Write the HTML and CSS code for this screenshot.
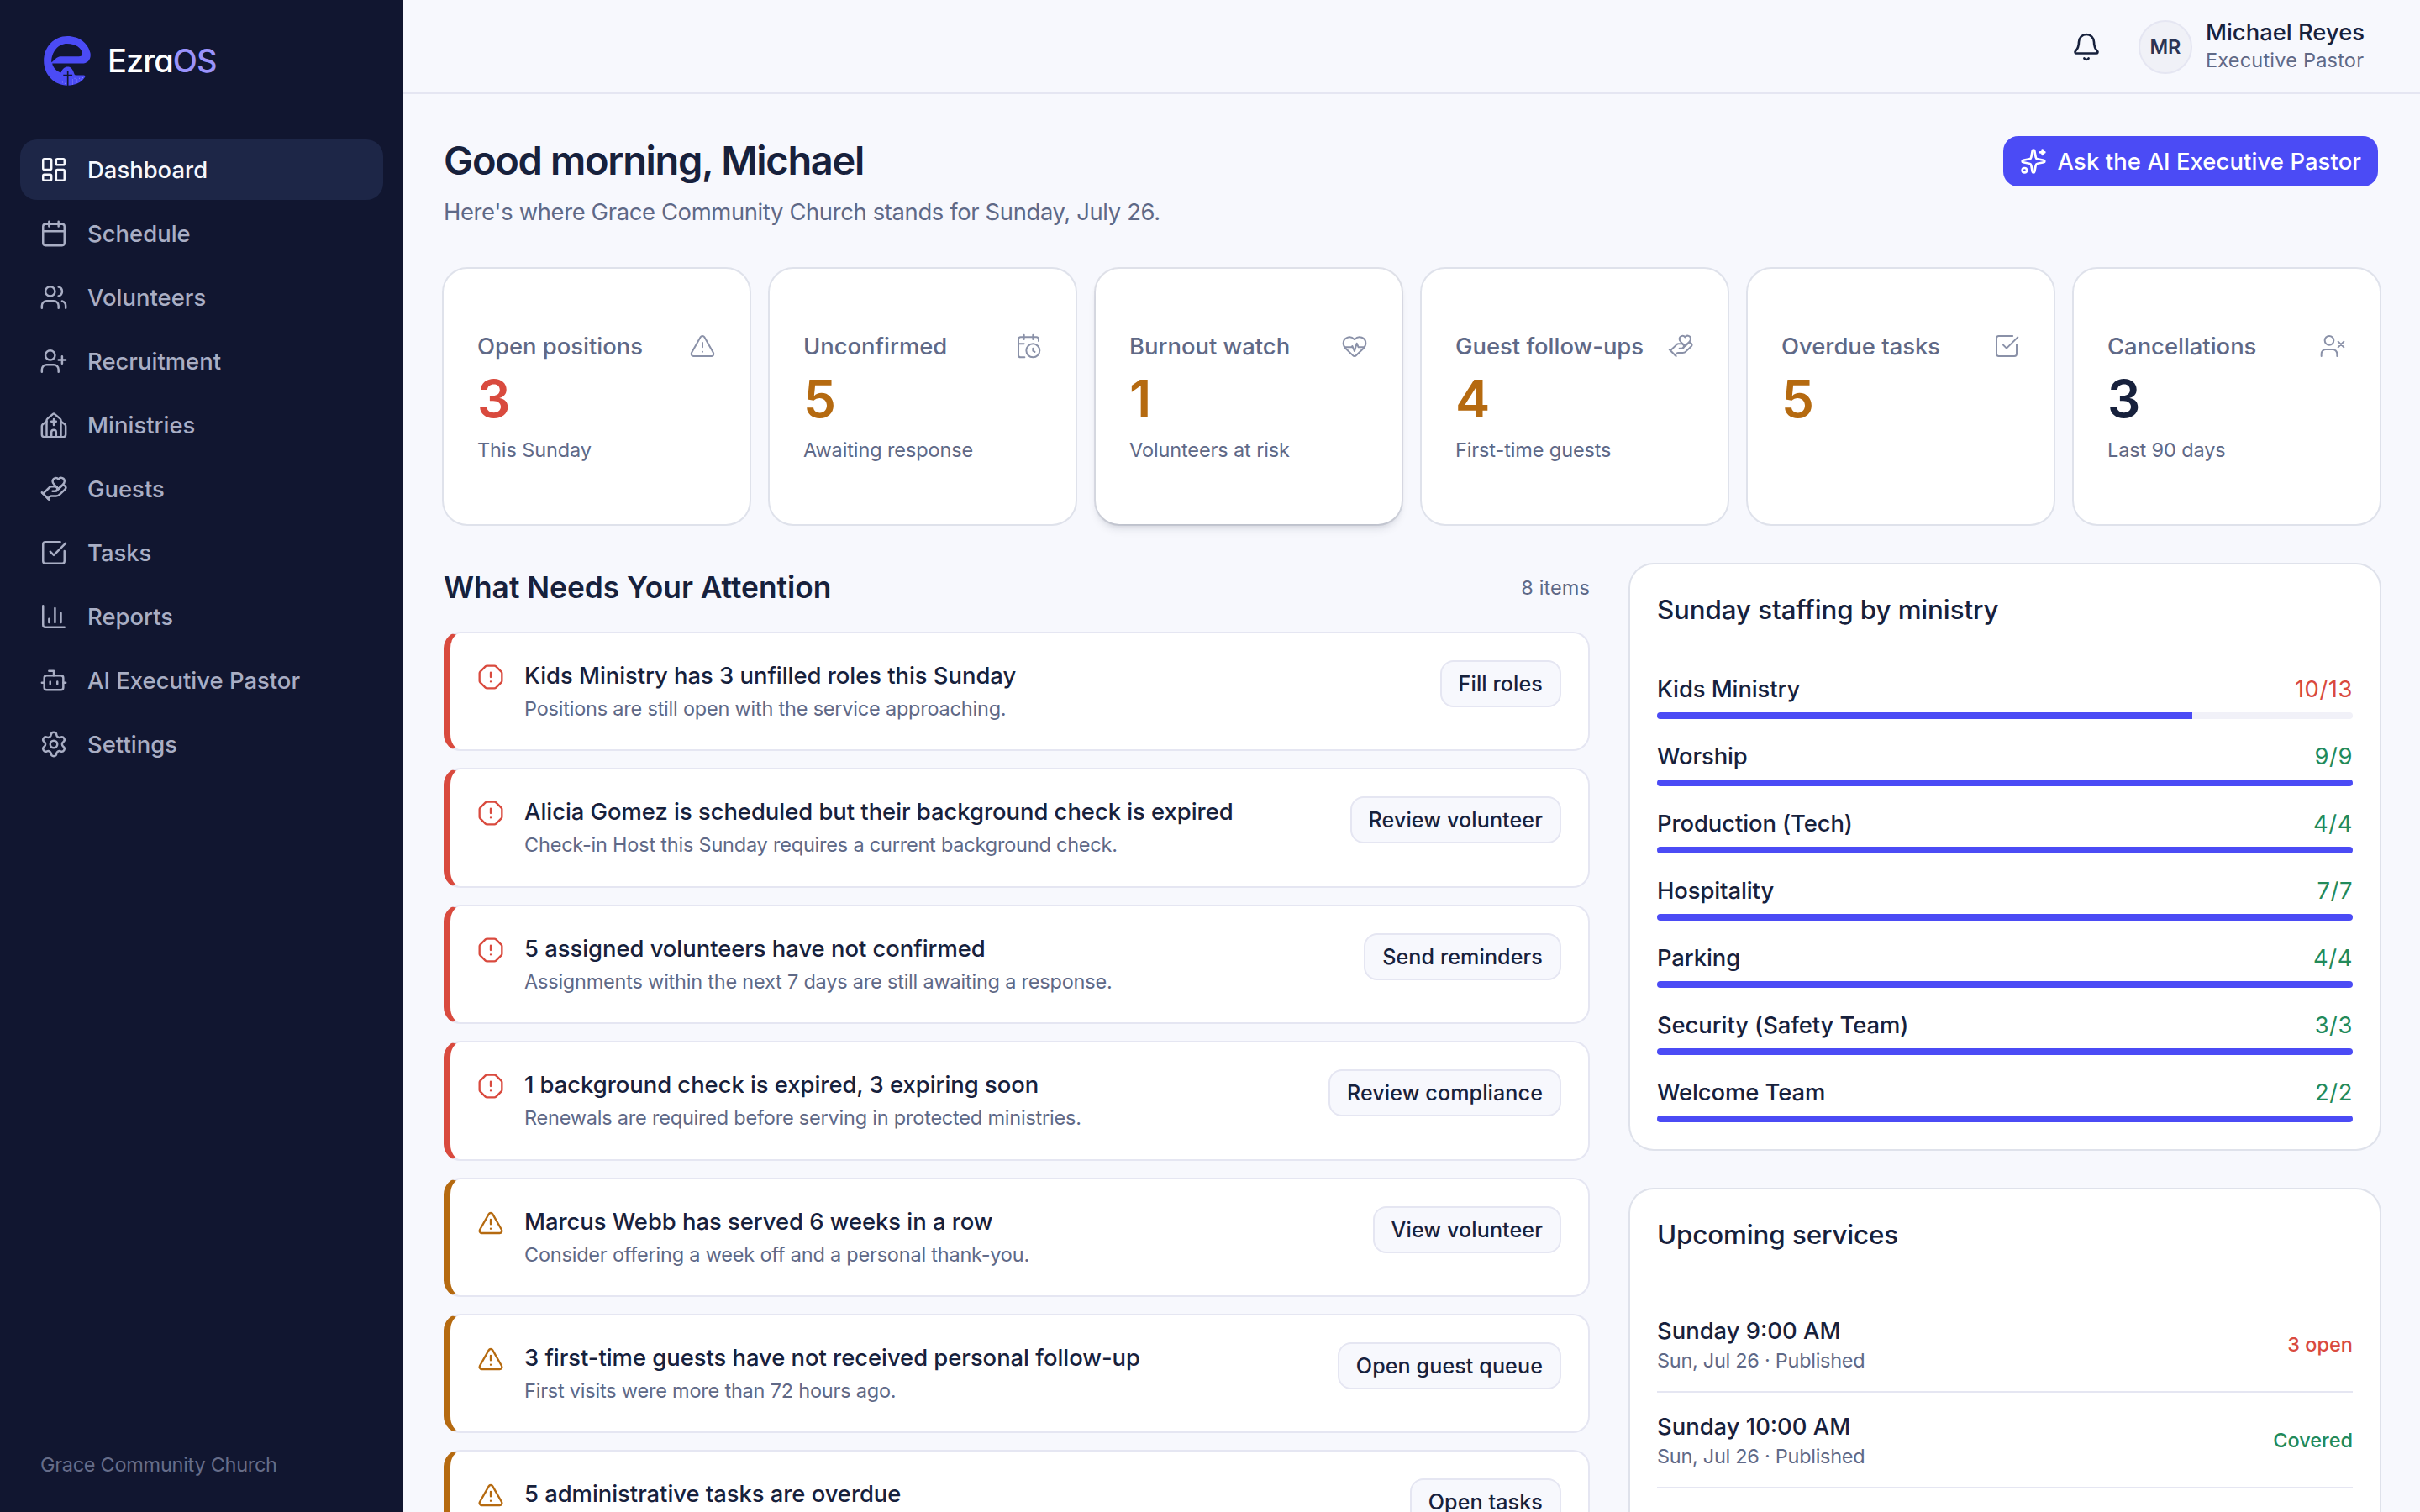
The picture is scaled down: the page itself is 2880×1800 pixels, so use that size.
FILE: index.html
```html
<!DOCTYPE html>
<html lang="en">
<head>
  <meta charset="UTF-8">
  <meta name="viewport" content="width=device-width, initial-scale=1.0">
  <title>EzraOS Dashboard</title>
  <link rel="stylesheet" href="styles.css">
</head>
<body>

  <!-- Icon sprite -->
  <svg class="sprite" aria-hidden="true">
    <symbol id="i-dashboard" viewBox="0 0 24 24"><rect x="3" y="3" width="7" height="9" rx="1"/><rect x="14" y="3" width="7" height="5" rx="1"/><rect x="14" y="12" width="7" height="9" rx="1"/><rect x="3" y="16" width="7" height="5" rx="1"/></symbol>
    <symbol id="i-calendar" viewBox="0 0 24 24"><path d="M8 2v4M16 2v4M3 10h18"/><rect x="3" y="4" width="18" height="18" rx="2"/></symbol>
    <symbol id="i-users" viewBox="0 0 24 24"><path d="M16 21v-2a4 4 0 0 0-4-4H6a4 4 0 0 0-4 4v2"/><circle cx="9" cy="7" r="4"/><path d="M22 21v-2a4 4 0 0 0-3-3.87M16 3.13a4 4 0 0 1 0 7.75"/></symbol>
    <symbol id="i-user-plus" viewBox="0 0 24 24"><path d="M16 21v-2a4 4 0 0 0-4-4H6a4 4 0 0 0-4 4v2"/><circle cx="9" cy="7" r="4"/><path d="M19 8v6M22 11h-6"/></symbol>
    <symbol id="i-user-x" viewBox="0 0 24 24"><path d="M16 21v-2a4 4 0 0 0-4-4H6a4 4 0 0 0-4 4v2"/><circle cx="9" cy="7" r="4"/><path d="m17 8 5 5M22 8l-5 5"/></symbol>
    <symbol id="i-church" viewBox="0 0 24 24"><path d="M10 9h4M12 7v5M14 22v-4a2 2 0 0 0-4 0v4"/><path d="M6 22V8.2a2 2 0 0 1 .76-1.57l4.6-3.9a1 1 0 0 1 1.28 0l4.6 3.9A2 2 0 0 1 18 8.2V22"/><path d="m18 9 3.4 2.5a2 2 0 0 1 .6 1.4V20a2 2 0 0 1-2 2H4a2 2 0 0 1-2-2v-7.1a2 2 0 0 1 .6-1.4L6 9"/></symbol>
    <symbol id="i-hand-heart" viewBox="0 0 24 24"><path d="M11 14h2a2 2 0 1 0 0-4h-3c-.6 0-1.1.2-1.4.6L3 16"/><path d="m7 20 1.6-1.4c.3-.4.8-.6 1.4-.6h4c1.1 0 2.1-.4 2.8-1.2l4.6-4.4a2 2 0 0 0-2.75-2.91l-4.2 3.9"/><path d="m2 15 6 6"/><path d="M19.5 8.5c.7-.7 1.5-1.6 1.5-2.7A2.73 2.73 0 0 0 16 4a2.78 2.78 0 0 0-5 1.8c0 1.2.8 2 1.5 2.8L16 12Z"/></symbol>
    <symbol id="i-check" viewBox="0 0 24 24"><path d="M21 10.656V19a2 2 0 0 1-2 2H5a2 2 0 0 1-2-2V5a2 2 0 0 1 2-2h12.344"/><path d="m9 11 3 3L22 4"/></symbol>
    <symbol id="i-chart" viewBox="0 0 24 24"><path d="M3 3v16a2 2 0 0 0 2 2h16M18 17V9M13 17V5M8 17v-3"/></symbol>
    <symbol id="i-bot" viewBox="0 0 24 24"><path d="M12 8V4H8"/><rect x="4" y="8" width="16" height="12" rx="2"/><path d="M2 14h2M20 14h2M15 13v2M9 13v2"/></symbol>
    <symbol id="i-settings" viewBox="0 0 24 24"><path d="M9.671 4.136a2.34 2.34 0 0 1 4.659 0 2.34 2.34 0 0 0 3.319 1.915 2.34 2.34 0 0 1 2.33 4.033 2.34 2.34 0 0 0 0 3.831 2.34 2.34 0 0 1-2.33 4.033 2.34 2.34 0 0 0-3.319 1.915 2.34 2.34 0 0 1-4.659 0 2.34 2.34 0 0 0-3.32-1.915 2.34 2.34 0 0 1-2.33-4.033 2.34 2.34 0 0 0 0-3.831A2.34 2.34 0 0 1 6.35 6.051a2.34 2.34 0 0 0 3.319-1.915"/><circle cx="12" cy="12" r="3"/></symbol>
    <symbol id="i-triangle" viewBox="0 0 24 24"><path d="m21.73 18-8-14a2 2 0 0 0-3.48 0l-8 14A2 2 0 0 0 4 21h16a2 2 0 0 0 1.73-3M12 9v4M12 17h.01"/></symbol>
    <symbol id="i-octagon" viewBox="0 0 24 24"><path d="M12 16h.01M12 8v4M15.312 2a2 2 0 0 1 1.414.586l4.688 4.688A2 2 0 0 1 22 8.688v6.624a2 2 0 0 1-.586 1.414l-4.688 4.688a2 2 0 0 1-1.414.586H8.688a2 2 0 0 1-1.414-.586l-4.688-4.688A2 2 0 0 1 2 15.312V8.688a2 2 0 0 1 .586-1.414l4.688-4.688A2 2 0 0 1 8.688 2z"/></symbol>
    <symbol id="i-calendar-clock" viewBox="0 0 24 24"><path d="M16 14v2.2l1.6 1M16 2v4M21 7.5V6a2 2 0 0 0-2-2H5a2 2 0 0 0-2 2v14a2 2 0 0 0 2 2h3.5M3 10h5M8 2v4"/><circle cx="16" cy="16" r="6"/></symbol>
    <symbol id="i-heart-pulse" viewBox="0 0 24 24"><path d="M2 9.5a5.5 5.5 0 0 1 9.591-3.676.56.56 0 0 0 .818 0A5.49 5.49 0 0 1 22 9.5c0 2.29-1.5 4-3 5.5l-5.492 5.313a2 2 0 0 1-3 .019L5 15c-1.5-1.5-3-3.2-3-5.5"/><path d="M3.22 13H9.5l.5-1 2 4.5 2-7 1.5 3.5h5.27"/></symbol>
    <symbol id="i-bell" viewBox="0 0 24 24"><path d="M10.268 21a2 2 0 0 0 3.464 0"/><path d="M3.262 15.326A1 1 0 0 0 4 17h16a1 1 0 0 0 .74-1.673C19.41 13.956 18 12.499 18 8A6 6 0 0 0 6 8c0 4.499-1.411 5.956-2.738 7.326"/></symbol>
    <symbol id="i-sparkles" viewBox="0 0 24 24"><path d="M11.017 2.814a1 1 0 0 1 1.966 0l1.051 5.558a2 2 0 0 0 1.594 1.594l5.558 1.051a1 1 0 0 1 0 1.966l-5.558 1.051a2 2 0 0 0-1.594 1.594l-1.051 5.558a1 1 0 0 1-1.966 0l-1.051-5.558a2 2 0 0 0-1.594-1.594l-5.558-1.051a1 1 0 0 1 0-1.966l5.558-1.051a2 2 0 0 0 1.594-1.594z"/><path d="M20 2v4M22 4h-4"/><circle cx="4" cy="20" r="2"/></symbol>
  </svg>

  <div class="app">

    <!-- Sidebar -->
    <aside class="sidebar">
      <div class="brand">
        <svg class="brand-mark" viewBox="68 38 166 176">
          <path class="mark-body" fill-rule="evenodd" d="M152 38C194 38 226 64 233 98C237 120 224 135 203 135L98 135C100 148 112 164 129 167C134 154 142 147 153 147C164 147 170 155 175 169C177 176 180 177 186 177L208 177C215 177 216 181 213 185C200 204 178 213 152 213C104 213 68 174 68 126C68 76 104 38 152 38ZM95 131C95 92 120 65 150 65C182 65 201 80 204 98C205 106 201 110 192 110L128 110C110 112 108 122 95 131Z"/>
          <path class="mark-cross" d="M153 160V215M137 177H169"/>
          <path class="mark-dots" d="M134 202h.1M144 206h.1M170 202h.1M170 193h.1M178 198h.1M178 188h.1M186 202h.1M186 193h.1M194 198h.1M194 188h.1M202 192h.1M206 186h.1M170 208h.1"/>
        </svg>
        <span class="brand-name">Ezra<span class="brand-os">OS</span></span>
      </div>

      <nav class="nav">
        <a class="nav-item active"><svg class="icon"><use href="#i-dashboard"/></svg>Dashboard</a>
        <a class="nav-item"><svg class="icon"><use href="#i-calendar"/></svg>Schedule</a>
        <a class="nav-item"><svg class="icon"><use href="#i-users"/></svg>Volunteers</a>
        <a class="nav-item"><svg class="icon"><use href="#i-user-plus"/></svg>Recruitment</a>
        <a class="nav-item"><svg class="icon"><use href="#i-church"/></svg>Ministries</a>
        <a class="nav-item"><svg class="icon"><use href="#i-hand-heart"/></svg>Guests</a>
        <a class="nav-item"><svg class="icon"><use href="#i-check"/></svg>Tasks</a>
        <a class="nav-item"><svg class="icon"><use href="#i-chart"/></svg>Reports</a>
        <a class="nav-item"><svg class="icon"><use href="#i-bot"/></svg>AI Executive Pastor</a>
        <a class="nav-item"><svg class="icon"><use href="#i-settings"/></svg>Settings</a>
      </nav>

      <div class="sidebar-footer">Grace Community Church</div>
    </aside>

    <div class="main">

      <!-- Top bar -->
      <header class="topbar">
        <svg class="icon bell"><use href="#i-bell"/></svg>
        <div class="avatar">MR</div>
        <div class="user">
          <div class="user-name">Michael Reyes</div>
          <div class="user-role">Executive Pastor</div>
        </div>
      </header>

      <main class="content">
        <div class="page-head">
          <div>
            <h1>Good morning, Michael</h1>
            <p class="subtitle">Here's where Grace Community Church stands for Sunday, July 26.</p>
          </div>
          <button class="ask-btn"><svg class="icon"><use href="#i-sparkles"/></svg>Ask the AI Executive Pastor</button>
        </div>

        <!-- Stat cards -->
        <section class="stats">
          <div class="card stat">
            <div class="stat-label">Open positions<svg class="icon"><use href="#i-triangle"/></svg></div>
            <div class="stat-value danger">3</div>
            <div class="stat-note">This Sunday</div>
          </div>
          <div class="card stat">
            <div class="stat-label">Unconfirmed<svg class="icon"><use href="#i-calendar-clock"/></svg></div>
            <div class="stat-value warn">5</div>
            <div class="stat-note">Awaiting response</div>
          </div>
          <div class="card stat raised">
            <div class="stat-label">Burnout watch<svg class="icon"><use href="#i-heart-pulse"/></svg></div>
            <div class="stat-value warn">1</div>
            <div class="stat-note">Volunteers at risk</div>
          </div>
          <div class="card stat">
            <div class="stat-label">Guest follow-ups<svg class="icon"><use href="#i-hand-heart"/></svg></div>
            <div class="stat-value warn">4</div>
            <div class="stat-note">First-time guests</div>
          </div>
          <div class="card stat">
            <div class="stat-label">Overdue tasks<svg class="icon"><use href="#i-check"/></svg></div>
            <div class="stat-value warn">5</div>
          </div>
          <div class="card stat">
            <div class="stat-label">Cancellations<svg class="icon"><use href="#i-user-x"/></svg></div>
            <div class="stat-value">3</div>
            <div class="stat-note">Last 90 days</div>
          </div>
        </section>

        <div class="columns">

          <!-- Attention list -->
          <section class="attention">
            <div class="section-head">
              <h2>What Needs Your Attention</h2>
              <span class="count">8 items</span>
            </div>
            <div class="alerts">
              <div class="alert critical">
                <svg class="icon"><use href="#i-octagon"/></svg>
                <div class="alert-text">
                  <div class="alert-title">Kids Ministry has 3 unfilled roles this Sunday</div>
                  <div class="alert-note">Positions are still open with the service approaching.</div>
                </div>
                <button class="alert-btn">Fill roles</button>
              </div>
              <div class="alert critical">
                <svg class="icon"><use href="#i-octagon"/></svg>
                <div class="alert-text">
                  <div class="alert-title">Alicia Gomez is scheduled but their background check is expired</div>
                  <div class="alert-note">Check-in Host this Sunday requires a current background check.</div>
                </div>
                <button class="alert-btn">Review volunteer</button>
              </div>
              <div class="alert critical">
                <svg class="icon"><use href="#i-octagon"/></svg>
                <div class="alert-text">
                  <div class="alert-title">5 assigned volunteers have not confirmed</div>
                  <div class="alert-note">Assignments within the next 7 days are still awaiting a response.</div>
                </div>
                <button class="alert-btn">Send reminders</button>
              </div>
              <div class="alert critical">
                <svg class="icon"><use href="#i-octagon"/></svg>
                <div class="alert-text">
                  <div class="alert-title">1 background check is expired, 3 expiring soon</div>
                  <div class="alert-note">Renewals are required before serving in protected ministries.</div>
                </div>
                <button class="alert-btn">Review compliance</button>
              </div>
              <div class="alert warning">
                <svg class="icon"><use href="#i-triangle"/></svg>
                <div class="alert-text">
                  <div class="alert-title">Marcus Webb has served 6 weeks in a row</div>
                  <div class="alert-note">Consider offering a week off and a personal thank-you.</div>
                </div>
                <button class="alert-btn">View volunteer</button>
              </div>
              <div class="alert warning">
                <svg class="icon"><use href="#i-triangle"/></svg>
                <div class="alert-text">
                  <div class="alert-title">3 first-time guests have not received personal follow-up</div>
                  <div class="alert-note">First visits were more than 72 hours ago.</div>
                </div>
                <button class="alert-btn">Open guest queue</button>
              </div>
              <div class="alert warning">
                <svg class="icon"><use href="#i-triangle"/></svg>
                <div class="alert-text">
                  <div class="alert-title">5 administrative tasks are overdue</div>
                </div>
                <button class="alert-btn">Open tasks</button>
              </div>
            </div>
          </section>

          <div class="side">
            <!-- Staffing -->
            <section class="card panel">
              <h3>Sunday staffing by ministry</h3>
              <div class="staffing">
                <div class="staff-row">
                  <div class="staff-line"><span>Kids Ministry</span><span class="ratio danger">10/13</span></div>
                  <div class="bar"><div class="bar-fill" style="width: 76.9%"></div></div>
                </div>
                <div class="staff-row">
                  <div class="staff-line"><span>Worship</span><span class="ratio ok">9/9</span></div>
                  <div class="bar"><div class="bar-fill" style="width: 100%"></div></div>
                </div>
                <div class="staff-row">
                  <div class="staff-line"><span>Production (Tech)</span><span class="ratio ok">4/4</span></div>
                  <div class="bar"><div class="bar-fill" style="width: 100%"></div></div>
                </div>
                <div class="staff-row">
                  <div class="staff-line"><span>Hospitality</span><span class="ratio ok">7/7</span></div>
                  <div class="bar"><div class="bar-fill" style="width: 100%"></div></div>
                </div>
                <div class="staff-row">
                  <div class="staff-line"><span>Parking</span><span class="ratio ok">4/4</span></div>
                  <div class="bar"><div class="bar-fill" style="width: 100%"></div></div>
                </div>
                <div class="staff-row">
                  <div class="staff-line"><span>Security (Safety Team)</span><span class="ratio ok">3/3</span></div>
                  <div class="bar"><div class="bar-fill" style="width: 100%"></div></div>
                </div>
                <div class="staff-row">
                  <div class="staff-line"><span>Welcome Team</span><span class="ratio ok">2/2</span></div>
                  <div class="bar"><div class="bar-fill" style="width: 100%"></div></div>
                </div>
              </div>
            </section>

            <!-- Services -->
            <section class="card panel services">
              <h3>Upcoming services</h3>
              <div class="service">
                <div>
                  <div class="service-name">Sunday 9:00 AM</div>
                  <div class="service-date">Sun, Jul 26 · Published</div>
                </div>
                <span class="service-status danger">3 open</span>
              </div>
              <div class="service">
                <div>
                  <div class="service-name">Sunday 10:00 AM</div>
                  <div class="service-date">Sun, Jul 26 · Published</div>
                </div>
                <span class="service-status ok">Covered</span>
              </div>
            </section>
          </div>

        </div>
      </main>
    </div>
  </div>

</body>
</html>
```
FILE: styles.css
```css
* {
  box-sizing: border-box;
}
body {
  margin: 0;
  font-family: Inter, "Liberation Sans", sans-serif;
  font-size: 27.4px;
  color: #17213c;
  background-color: #f7f8fd;
  overflow: hidden;
}
h1, h2, h3, p {
  margin: 0;
}
button {
  font-family: inherit;
  white-space: nowrap;
}
.sprite {
  display: none;
}
.icon {
  width: 32px;
  height: 32px;
  flex-shrink: 0;
  fill: none;
  stroke: currentColor;
  stroke-width: 1.75;
  stroke-linecap: round;
  stroke-linejoin: round;
}
.app {
  display: flex;
  height: 100vh;
  overflow: hidden;
}

/* Sidebar */
.sidebar {
  width: 480px;
  flex-shrink: 0;
  display: flex;
  flex-direction: column;
  background-color: #111630;
}
.brand {
  display: flex;
  align-items: center;
  gap: 20px;
  height: 142px;
  padding: 2px 0 0 52px;
}
.brand-mark {
  width: 56px;
  height: 59px;
}
.mark-body {
  fill: #4b4bf5;
}
.mark-cross {
  stroke: #111630;
  stroke-width: 5;
  fill: none;
}
.mark-dots {
  stroke: #a9a9fa;
  stroke-width: 2.5;
  stroke-linecap: round;
}
.brand-name {
  font-size: 38px;
  font-weight: 500;
  letter-spacing: -0.025em;
  font-feature-settings: "cv11";
  color: #fff;
}
.brand-os {
  color: #9b93fb;
}
.nav {
  display: flex;
  flex-direction: column;
  gap: 4px;
  padding: 24px 24px 0;
}
.nav-item {
  display: flex;
  align-items: center;
  gap: 23px;
  height: 72px;
  padding-left: 23px;
  border-radius: 20px;
  font-weight: 500;
  letter-spacing: 0.001em;
  color: #a9aec4;
}
.nav-item .icon {
  width: 34px;
  height: 34px;
}
.nav-item.active {
  background-color: #1d2647;
  color: #f7f8fd;
}
.sidebar-footer {
  margin-top: auto;
  padding: 0 48px 40px;
  font-size: 23.5px;
  line-height: 32px;
  letter-spacing: -0.012em;
  color: #666d89;
}

/* Top bar */
.main {
  flex: 1;
  min-width: 0;
}
.topbar {
  display: flex;
  align-items: center;
  justify-content: flex-end;
  height: 112px;
  padding: 2px 66px 0 0;
  border-bottom: 2px solid #e5e6f2;
}
.bell {
  width: 36px;
  height: 36px;
  margin-right: 44px;
}
.avatar {
  width: 64px;
  height: 64px;
  margin-right: 16px;
  border: 2px solid #e5e6f2;
  border-radius: 50%;
  background-color: #f0f1f7;
  font-size: 23.5px;
  font-weight: 600;
  line-height: 60px;
  text-align: center;
  color: #2c3553;
}
.user {
  margin-top: -2px;
  line-height: 33px;
}
.user-name {
  font-weight: 500;
}
.user-role {
  font-size: 23.5px;
  letter-spacing: 0.009em;
  color: #5f6987;
}

/* Page */
.content {
  padding: 48px;
}
.page-head {
  display: flex;
  justify-content: space-between;
  align-items: flex-start;
  margin-bottom: 44px;
}
h1 {
  font-size: 47px;
  font-weight: 600;
  line-height: 62px;
  letter-spacing: -0.028em;
}
.subtitle {
  margin-top: 6px;
  line-height: 48px;
  letter-spacing: -0.013em;
  color: #5f6987;
}
.ask-btn {
  display: flex;
  align-items: center;
  gap: 13px;
  height: 64px;
  padding: 0 20px;
  border: 2px solid transparent;
  border-radius: 20px;
  background-color: #4b4bf5;
  background-clip: padding-box;
  font-size: 27.4px;
  font-weight: 500;
  letter-spacing: 0.004em;
  color: #fff;
}
.ask-btn .icon {
  stroke-width: 2;
}

.card {
  background-color: #fff;
  border-radius: 28px;
  box-shadow: 0 0 0 2px #dfe2eb;
}
.danger {
  color: #d94a3e;
}
.warn {
  color: #b56a10;
}
.ok {
  color: #228a5a;
}

/* Stat cards */
.stats {
  display: grid;
  grid-template-columns: repeat(6, 1fr);
  gap: 24px;
  margin-bottom: 48px;
}
.stat {
  height: 304px;
  padding: 72px 40px 0;
}
.stat.raised {
  box-shadow: 0 0 0 2px rgba(23, 33, 60, 0.1), 0 8px 12px -2px rgba(23, 33, 60, 0.09), 0 4px 8px -4px rgba(23, 33, 60, 0.2);
}
.stat-label {
  display: flex;
  justify-content: space-between;
  align-items: center;
  font-weight: 500;
  line-height: 40px;
  white-space: nowrap;
  color: #5f6987;
}
.stat-label .icon {
  stroke-width: 1.5;
  color: #8a91a8;
}
.stat-value {
  margin-top: 9px;
  font-size: 62px;
  font-weight: 600;
  line-height: 68px;
}
.stat-note {
  margin-top: 7px;
  font-size: 23.5px;
  line-height: 40px;
  letter-spacing: -0.005em;
  color: #5f6987;
}

.columns {
  display: grid;
  grid-template-columns: 1fr 892px;
  gap: 48px;
}

/* Attention list */
.section-head {
  display: flex;
  justify-content: space-between;
  align-items: center;
  height: 54px;
  margin-bottom: 26px;
}
h2 {
  font-size: 35.3px;
  font-weight: 600;
}
.count {
  font-size: 23.5px;
  letter-spacing: 0.004em;
  color: #5f6987;
}
.alerts {
  display: flex;
  flex-direction: column;
  gap: 20px;
}
.alert {
  display: flex;
  align-items: flex-start;
  height: 142.4px;
  padding: 32px;
  border: 2px solid #e5e6f2;
  border-left-width: 8px;
  border-radius: 20px;
  background-color: #fff;
}
.alert.critical {
  border-left-color: #d94a3e;
}
.alert.critical .icon {
  color: #d94a3e;
}
.alert.warning {
  border-left-color: #b56a10;
}
.alert.warning .icon {
  color: #b56a10;
}
.alert .icon {
  margin: 4px 24px 0 0;
}
.alert-text {
  flex: 1;
}
.alert-title {
  font-weight: 500;
  line-height: 36px;
  letter-spacing: -0.001em;
}
.alert-note {
  margin-top: 4px;
  font-size: 23.5px;
  line-height: 36px;
  letter-spacing: -0.009em;
  color: #5f6987;
}
.alert-btn {
  height: 56px;
  padding: 0 20px;
  border: 2px solid #e5e6f2;
  border-radius: 16px;
  background-color: #f7f8fd;
  font-size: 25.1px;
  font-weight: 500;
  letter-spacing: 0.004em;
  color: #17213c;
}

/* Right column */
.side {
  display: flex;
  flex-direction: column;
  gap: 48px;
}
.panel {
  padding: 32px;
}
h3 {
  margin-bottom: 51px;
  font-size: 31.3px;
  font-weight: 500;
  line-height: 45px;
  letter-spacing: -0.003em;
}
.staffing {
  display: flex;
  flex-direction: column;
  gap: 24px;
}
.staff-line {
  display: flex;
  justify-content: space-between;
  margin-bottom: 8px;
  font-weight: 500;
  line-height: 40px;
  letter-spacing: -0.003em;
}
.ratio {
  font-weight: 400;
  letter-spacing: 0.02em;
}
.bar {
  height: 8px;
  border-radius: 4px;
  background-color: #f1f1f8;
  overflow: hidden;
}
.bar-fill {
  height: 100%;
  background-color: #4b4bf5;
}
.services {
  height: 420px;
}
.service {
  display: flex;
  justify-content: space-between;
  align-items: center;
  padding: 20px 0;
  border-bottom: 2px solid #e5e6f2;
}
.service-name {
  font-weight: 500;
  line-height: 40px;
}
.service-date {
  font-size: 23.5px;
  line-height: 32px;
  letter-spacing: -0.012em;
  color: #5f6987;
}
.service-status {
  font-size: 23.5px;
  font-weight: 500;
}
```
